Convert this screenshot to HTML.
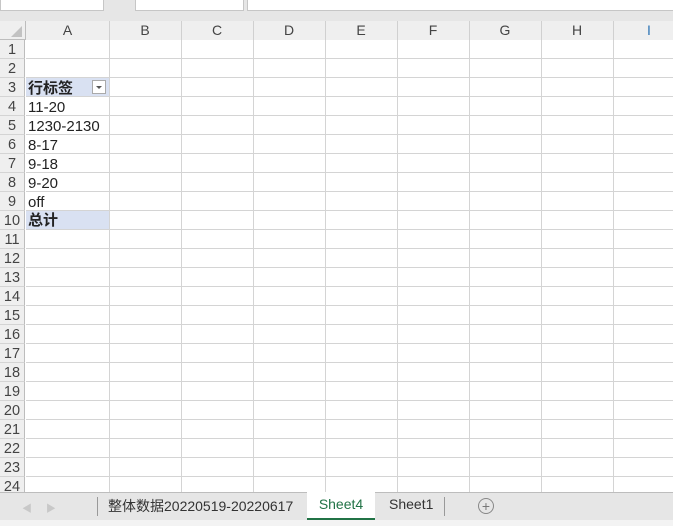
<!DOCTYPE html><html><head><style>
body{margin:0;width:673px;height:526px;overflow:hidden;background:#fff;font-family:"Liberation Sans","Noto Sans CJK SC",sans-serif;position:relative}
.a{position:absolute}
.top{left:0;top:0;width:673px;height:21px;background:#e6e6e6}
.box{background:#fff;border:1px solid #c6c6c6;border-top:none;height:10px;top:0}
.hdr{background:#efefef;color:#444;font-size:14px;text-align:center;line-height:19px}
.vl{width:1px;background:#d4d4d4;top:40px;height:452px}
.hl{height:1px;background:#d4d4d4;left:26px;width:647px}
.rn{left:0;width:25px;height:19px;background:#efefef;color:#444;font-size:14.5px;text-align:center;line-height:21px;border-bottom:1px solid #d4d4d4;box-sizing:border-box;border-right:1px solid #bdbdbd}
.c{left:28px;font-size:15px;color:#222;line-height:21px;height:19px}
</style></head><body>
<div class="a top"></div>
<div class="a box" style="left:0;width:102px"></div>
<div class="a box" style="left:135px;width:107px"></div>
<div class="a box" style="left:247px;width:426px"></div>
<div class="a hdr" style="left:0;top:21px;width:673px;height:18px;border-bottom:1px solid #bdbdbd"></div>
<svg class="a" style="left:11px;top:26px" width="12" height="12"><path d="M11 0V11H0Z" fill="#c2c2c2"/></svg>
<div class="a hdr" style="left:26px;top:21px;width:83px">A</div>
<div class="a hdr" style="left:109px;top:21px;width:72px">B</div>
<div class="a hdr" style="left:181px;top:21px;width:72px">C</div>
<div class="a hdr" style="left:253px;top:21px;width:72px">D</div>
<div class="a hdr" style="left:325px;top:21px;width:72px">E</div>
<div class="a hdr" style="left:397px;top:21px;width:72px">F</div>
<div class="a hdr" style="left:469px;top:21px;width:72px">G</div>
<div class="a hdr" style="left:541px;top:21px;width:72px">H</div>
<div class="a hdr" style="left:613px;top:21px;width:72px;color:#2e75b6">I</div>
<div class="a" style="left:25px;top:21px;width:1px;height:19px;background:#bdbdbd"></div>
<div class="a" style="left:109px;top:21px;width:1px;height:19px;background:#d0d0d0"></div>
<div class="a" style="left:181px;top:21px;width:1px;height:19px;background:#d0d0d0"></div>
<div class="a" style="left:253px;top:21px;width:1px;height:19px;background:#d0d0d0"></div>
<div class="a" style="left:325px;top:21px;width:1px;height:19px;background:#d0d0d0"></div>
<div class="a" style="left:397px;top:21px;width:1px;height:19px;background:#d0d0d0"></div>
<div class="a" style="left:469px;top:21px;width:1px;height:19px;background:#d0d0d0"></div>
<div class="a" style="left:541px;top:21px;width:1px;height:19px;background:#d0d0d0"></div>
<div class="a" style="left:613px;top:21px;width:1px;height:19px;background:#d0d0d0"></div>
<div class="a" style="left:26px;top:78px;width:83px;height:18px;background:#d9e1f2;border-bottom:1px solid #9bb3d9"></div>
<div class="a" style="left:26px;top:210px;width:83px;height:19px;background:#d9e1f2;border-top:1px solid #9bb3d9;box-sizing:border-box"></div>
<div id="g"></div>
<div class="a vl" style="left:109px"></div><div class="a vl" style="left:181px"></div><div class="a vl" style="left:253px"></div><div class="a vl" style="left:325px"></div><div class="a vl" style="left:397px"></div><div class="a vl" style="left:469px"></div><div class="a vl" style="left:541px"></div><div class="a vl" style="left:613px"></div>
<div class="a" style="left:92px;top:80px;width:14px;height:14px;background:#fff;border:1px solid #aaa;box-sizing:border-box"></div>
<svg class="a" style="left:96px;top:86px" width="7" height="4"><path d="M0 0H6L3 3Z" fill="#555"/></svg>
<div class="a c" style="top:78px;font-weight:bold">行标签</div>
<div class="a c" style="top:97px">11-20</div>
<div class="a c" style="top:116px">1230-2130</div>
<div class="a c" style="top:135px">8-17</div>
<div class="a c" style="top:154px">9-18</div>
<div class="a c" style="top:173px">9-20</div>
<div class="a c" style="top:192px">off</div>
<div class="a c" style="top:210px;font-weight:bold">总计</div>
<script>
var h='';for(var i=1;i<=24;i++){var t=39+(i-1)*19;h+='<div class="a rn" style="top:'+(t+1)+'px">'+i+'</div><div class="a hl" style="top:'+(t+19)+'px"></div>';}
document.getElementById('g').innerHTML=h;
</script>
<div class="a" style="left:0;top:492px;width:673px;height:28px;background:#e6e6e6;border-top:1px solid #bdbdbd"></div>
<div class="a" style="left:22px;top:500px;color:#c8c8c8;font-size:10px">◀&nbsp;&nbsp;&nbsp;&nbsp;&nbsp;▶</div>
<div class="a" style="left:97px;top:497px;width:1px;height:19px;background:#999"></div>
<div class="a" style="left:108px;top:496px;font-size:14px;color:#333">整体数据20220519-20220617</div>
<div class="a" style="left:307px;top:492px;width:68px;height:26px;background:#fff;border-bottom:2px solid #217346;font-size:14px;color:#217346;text-align:center;line-height:24px">Sheet4</div>
<div class="a" style="left:389px;top:496px;font-size:14px;color:#333">Sheet1</div>
<div class="a" style="left:444px;top:497px;width:1px;height:19px;background:#999"></div>
<div class="a" style="left:478px;top:498px;width:14px;height:14px;border:1px solid #888;border-radius:50%;color:#777;font-size:14px;line-height:14px;text-align:center">+</div>
<div class="a" style="left:0;top:520px;width:673px;height:6px;background:#f3f3f3"></div>
</body></html>
